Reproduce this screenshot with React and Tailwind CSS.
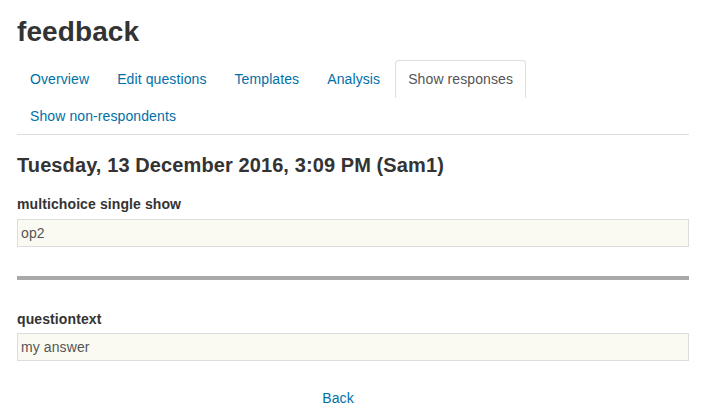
import React from "react";

const tabs = ["Overview", "Edit questions", "Templates", "Analysis", "Show responses", "Show non-respondents"];

const App = () => {
  const active = "Show responses";

  return (
    <div className="min-h-[418px] bg-white pl-[17px] pr-[12px] text-[#333] font-['Liberation_Sans',Arial,sans-serif] text-[14px] leading-[20px] tracking-[0.1px]">
      <h2 className="mt-[15px] text-[28px] leading-[33px] font-bold">feedback</h2>

      {/* Tabs */}
      <ul className="mt-[12px] flex flex-wrap border-b border-[#ddd]">
        {tabs.map((tab) => (
          <li key={tab} className="-mb-px mr-[2px]">
            {tab === active ? (
              <span className="block rounded-t-[4px] border border-[#ddd] border-b-transparent bg-white px-[12px] py-[8px] text-[#555]">
                {tab}
              </span>
            ) : (
              <a href="#" className="block border border-transparent px-[12px] py-[8px] text-[#0070a8]">
                {tab}
              </a>
            )}
          </li>
        ))}
      </ul>

      <h3 className="mt-[18px] text-[20px] leading-[24px] font-bold">
        Tuesday, 13 December 2016, 3:09 PM (Sam1)
      </h3>

      {/* Response 1 */}
      <div className="mt-[17px] font-bold">multichoice single show</div>
      <div className="mt-[5px] border border-[#ddd] bg-[#fafaf2] px-[3px] py-[3px] text-[#555]">op2</div>

      <div className="mt-[29px] h-[4px] bg-[#a9a9a9]" />

      {/* Response 2 */}
      <div className="mt-[29px] font-bold">questiontext</div>
      <div className="mt-[4px] border border-[#ddd] bg-[#fafaf2] px-[3px] py-[3px] text-[#555]">my answer</div>

      <div className="-ml-[17px] mt-[27px] w-[676px] text-center">
        <a href="#" className="text-[#0070a8]">Back</a>
      </div>
    </div>
  );
};

export default App;
